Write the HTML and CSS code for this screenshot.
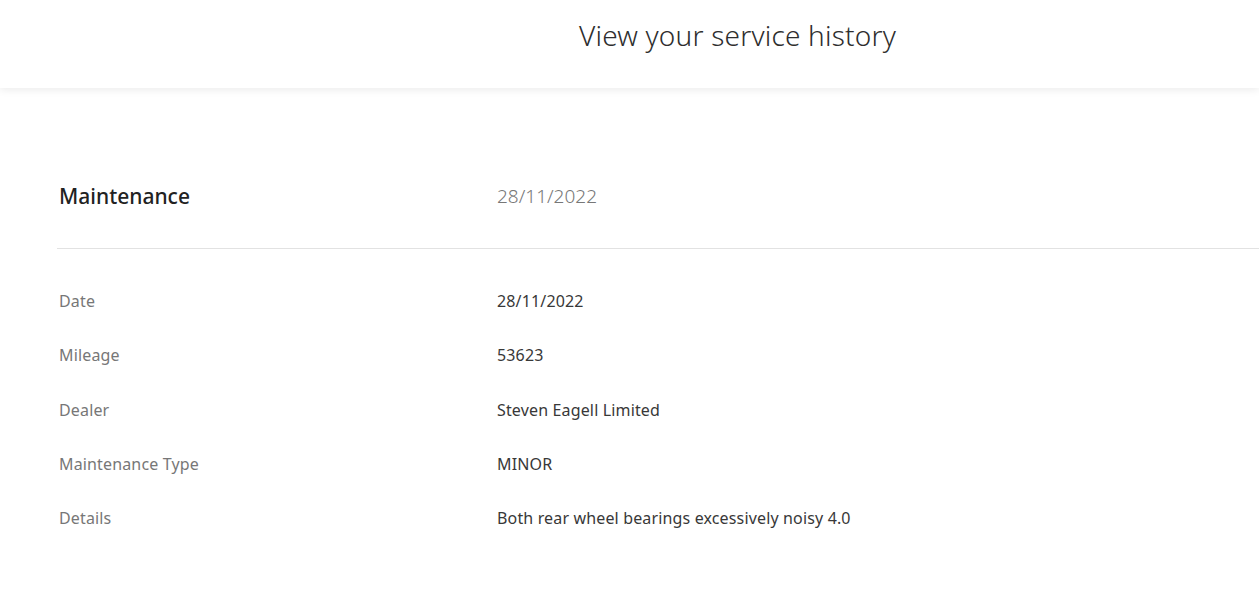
FILE: index.html
```html
<!DOCTYPE html>
<html lang="en">
<head>
  <meta charset="UTF-8">
  <title>Service history</title>
  <link rel="stylesheet" href="styles.css">
</head>
<body>
<div class="top">
  <h1>View your service history</h1>
</div>

<div class="record">
  <div class="record-head">
    <h2>Maintenance</h2>
    <span class="head-date">28/11/2022</span>
  </div>
  <ul class="fields">
    <li><span class="label">Date</span><span class="value">28/11/2022</span></li>
    <li><span class="label">Mileage</span><span class="value">53623</span></li>
    <li><span class="label">Dealer</span><span class="value">Steven Eagell Limited</span></li>
    <li><span class="label">Maintenance Type</span><span class="value">MINOR</span></li>
    <li><span class="label">Details</span><span class="value">Both rear wheel bearings excessively noisy 4.0</span></li>
  </ul>
</div>
</body>
</html>
```

FILE: styles.css
```css
*{
  margin: 0;
  padding: 0;
  list-style: none;
}
body{
  font-family: "Noto Sans", "Open Sans", sans-serif;
  background: #fff;
  color: #2b2b2b;
}
.top{
  height: 88px;
  display: flex;
  justify-content: center;
  padding-left: 216px;
  box-shadow: 0 2px 8px rgba(0,0,0,0.08);
}
.top h1{
  margin-top: 15px;
  font-size: 28px;
  line-height: 40px;
  font-weight: 300;
  color: #2e2e2e;
  letter-spacing: 0.2px;
}
.record{
  padding-top: 76px;
}
.record-head{
  display: flex;
  align-items: center;
  height: 64px;
  padding: 0 0 20px 2px;
  margin-left: 57px;
  border-bottom: 1px solid #e2e2e2;
}
.record-head h2{
  width: 438px;
  font-size: 21px;
  font-weight: 500;
  color: #222;
}
.head-date{
  font-size: 19px;
  font-weight: 300;
  color: #777;
}
.fields{
  padding: 25px 0 0 59px;
}
.fields li{
  display: flex;
  align-items: center;
  height: 54.3px;
  font-size: 16px;
  letter-spacing: 0.15px;
}
.label{
  width: 438px;
  color: #777;
}
.value{
  color: #383838;
}
```
